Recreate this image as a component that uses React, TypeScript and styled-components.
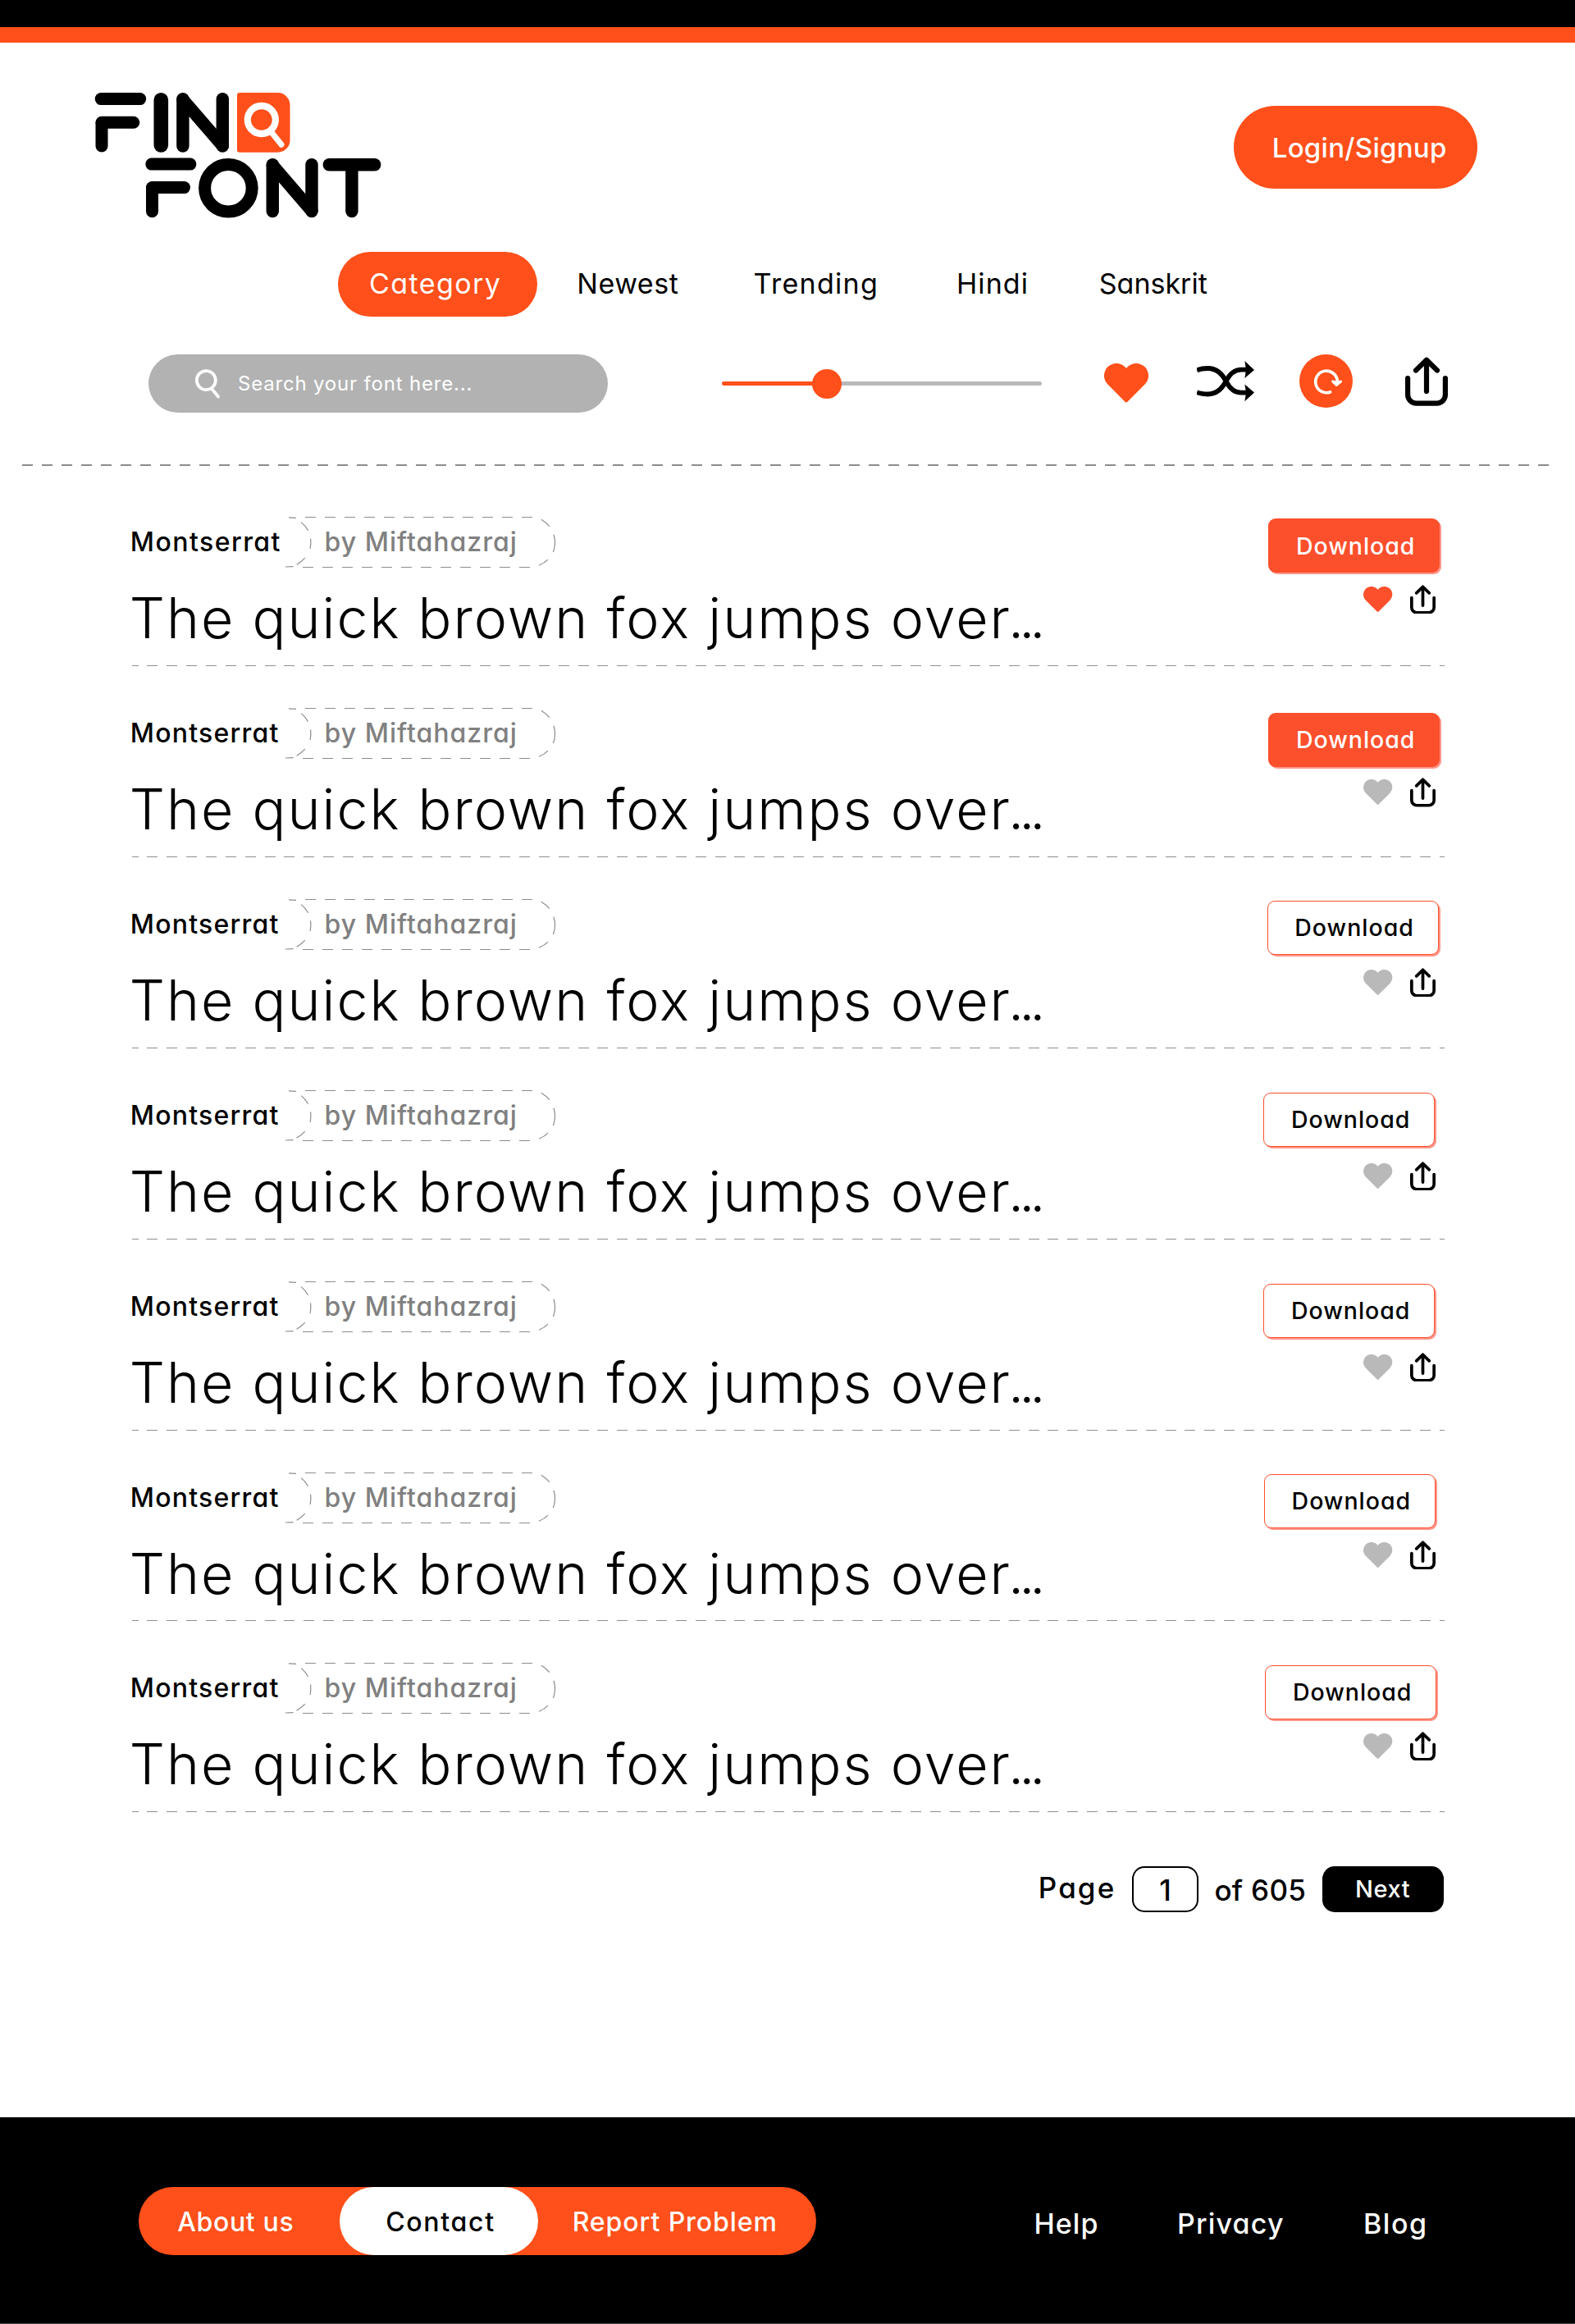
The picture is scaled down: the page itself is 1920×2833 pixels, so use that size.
import React from "react";
import styled, { createGlobalStyle } from "styled-components";

const ORANGE = "#ff4f1a";
const CORAL = "#fc4f2c";
const GREY = "#b9b9b9";

const GlobalStyle = createGlobalStyle`
  *, *::before, *::after { box-sizing: border-box; }
  body {
    margin: 0;
    background: #fff;
    color: #000;
    font-family: Inter, "Liberation Sans", sans-serif;
    font-feature-settings: "cv11";
  }
  button { font: inherit; font-feature-settings: inherit; border: 0; padding: 0; cursor: pointer; }
  a { color: inherit; text-decoration: none; }
  svg { display: block; flex: none; }
`;

const Page = styled.div`
  width: 1920px;
  height: 2833px;
  overflow: hidden;
  white-space: nowrap;
`;

const TopBar = styled.div`
  height: 52.3px;
  background: ${ORANGE};
  border-top: 33px solid #000;
`;

const Header = styled.header`
  display: flex;
  justify-content: space-between;
  align-items: flex-start;
  height: 254.7px;
  padding: 0 118.8px 0 115px;
`;

const Logo = styled.svg`
  margin-top: 59.7px;
`;

const LoginButton = styled.button`
  width: 297.2px;
  height: 101.3px;
  margin-top: 76.7px;
  padding-left: 46.7px;
  border-radius: 51px;
  background: ${ORANGE};
  color: #fff;
  text-align: left;
  font-size: 33px;
  font-weight: 500;
  letter-spacing: 0.28px;
`;

const Nav = styled.nav`
  display: grid;
  grid-template-columns: 291.3px 215.3px 247.4px 173.8px auto;
  align-items: center;
  height: 78.7px;
  padding-left: 412px;
`;

const NavItem = styled.a<{ $spacing: number; $active?: boolean }>`
  height: 78.7px;
  line-height: 78.7px;
  font-size: 34px;
  letter-spacing: ${(p) => p.$spacing}px;
  ${(p) =>
    p.$active &&
    `
    width: 243.2px;
    padding-left: 38px;
    border-radius: 40px;
    background: ${ORANGE};
    color: #fff;
  `}
`;

const Toolbar = styled.div`
  display: flex;
  align-items: center;
  height: 71px;
  margin: 46px 0 63px;
  padding-left: 180.6px;
`;

const SearchBox = styled.label`
  display: flex;
  align-items: center;
  width: 560.2px;
  height: 71px;
  padding-left: 56.4px;
  border-radius: 36px;
  background: #b2b2b2;
`;

const SearchInput = styled.input`
  width: 380px;
  height: 40px;
  margin-left: 21px;
  padding: 0;
  border: 0;
  outline: 0;
  background: transparent;
  color: #fff;
  font: 400 24px Inter, sans-serif;
  letter-spacing: 0.81px;
  &::placeholder { color: #fff; opacity: 1; }
`;

const SliderTrack = styled.div`
  display: flex;
  align-items: center;
  width: 390px;
  height: 5px;
  margin: 1px 76px 0 138.8px;
  border-radius: 3px;
  background: linear-gradient(to right, ${ORANGE} 128px, ${GREY} 128px);
`;

const SliderKnob = styled.div`
  width: 36px;
  height: 36px;
  margin-left: 110.6px;
  border-radius: 50%;
  background: ${ORANGE};
`;

const Tools = styled.div`
  display: grid;
  grid-template-columns: 113.9px 124.4px 128.7px auto;
  align-items: center;
`;

const IconButton = styled.button<{ $top?: number }>`
  background: none;
  margin-top: ${(p) => p.$top ?? 0}px;
`;

const RefreshBadge = styled.button`
  display: flex;
  align-items: center;
  justify-content: center;
  width: 65.4px;
  height: 65.4px;
  margin-top: -5px;
  border-radius: 50%;
  background: ${ORANGE};
`;

const SectionRule = styled.div`
  width: 1862px;
  height: 2px;
  margin-left: 27px;
  background: repeating-linear-gradient(to right, #8c8c8c 0 13.5px, transparent 13.5px 24px);
`;

const FontList = styled.ul`
  list-style: none;
  width: 1599.8px;
  margin: 11.4px 0 0 160.8px;
  padding: 0;
`;

const FontRow = styled.li`
  display: grid;
  grid-template-columns: 1fr auto;
  grid-template-rows: 1fr 1px;
  height: 232.9px;
`;

const RowRule = styled.div`
  grid-column: 1 / -1;
  height: 1px;
  background: repeating-linear-gradient(to right, #8f8f8f 0 13px, transparent 13px 23.87px);
  background-position-x: -5.5px;
  background-size: 1610px 1px;
`;

const FontInfo = styled.div`
  padding-top: 49px;
`;

const Meta = styled.div`
  display: flex;
  height: 66px;
  line-height: 66px;
  font-size: 32px;
  font-weight: 500;
`;

const FontName = styled.span<{ $spacing: number }>`
  width: 181.2px;
  margin-left: -2px;
  letter-spacing: ${(p) => p.$spacing}px;
`;

const AuthorTag = styled.span`
  position: relative;
  width: 340px;
  padding-left: 55.6px;
  color: #808080;
  letter-spacing: 1px;
`;

const TagOutline = styled.svg`
  position: absolute;
  inset: 0;
`;

const Sample = styled.p`
  margin: 20px 0 0 -3px;
  line-height: 79px;
  font-size: 68px;
  font-weight: 300;
  letter-spacing: 2px;
`;

const Ellipsis = styled.span`
  margin-left: -4px;
  letter-spacing: -6px;
`;

const Actions = styled.div`
  display: flex;
  flex-direction: column;
  align-items: flex-end;
`;

const DownloadButton = styled.button<{ $top: number; $right: number; $filled: boolean }>`
  width: 209px;
  height: 66px;
  margin: ${(p) => p.$top}px ${(p) => p.$right}px 0 0;
  padding-left: ${(p) => (p.$filled ? 33.7 : 32.7)}px;
  border: ${(p) => (p.$filled ? "0" : `1px solid ${CORAL}`)};
  border-radius: 9px;
  background: ${(p) => (p.$filled ? CORAL : "#fff")};
  box-shadow: 2px 2px 0 #ff968a;
  color: ${(p) => (p.$filled ? "#fff" : "#000")};
  text-align: left;
  font-size: 28.5px;
  font-weight: 500;
  letter-spacing: 0.98px;
`;

const RowIcons = styled.div<{ $gap: number }>`
  display: flex;
  align-items: center;
  gap: 21.7px;
  margin: ${(p) => p.$gap}px 10.4px 0 0;
`;

const Pagination = styled.div`
  display: flex;
  align-items: center;
  height: 56.7px;
  margin: 65.3px 0 249.3px;
  padding-left: 1265.8px;
  font-size: 35px;
  font-weight: 500;
`;

const PageLabel = styled.span`
  width: 114.2px;
  padding-bottom: 4px;
  letter-spacing: 2.1px;
`;

const PageInput = styled.span`
  display: flex;
  justify-content: center;
  align-items: center;
  width: 81px;
  height: 56.7px;
  padding-top: 2px;
  border: 2px solid #000;
  border-radius: 15px;
`;

const PageTotal = styled.span`
  width: 151.3px;
  padding: 2px 0 0 19.4px;
  letter-spacing: 0.32px;
`;

const NextButton = styled.button`
  width: 148.1px;
  height: 56.7px;
  padding-left: 39.7px;
  flex: none;
  border-radius: 15px;
  background: #000;
  color: #fff;
  text-align: left;
  font-size: 29px;
  font-weight: 500;
  letter-spacing: 0.56px;
`;

const Footer = styled.footer`
  display: flex;
  align-items: flex-start;
  height: 252px;
  padding: 85px 0 0 168.7px;
  background: #000;
  border-bottom: 1px solid #444;
  color: #fff;
  font-weight: 500;
`;

const FooterPills = styled.div`
  display: grid;
  grid-template-columns: 245.7px 241.6px 1fr;
  width: 826px;
  height: 83px;
  border-radius: 42px;
  background: ${ORANGE};
  font-size: 32px;
  line-height: 85px;
`;

const PillLink = styled.a<{ $pad: number; $spacing: number; $active?: boolean }>`
  height: 83px;
  padding-left: ${(p) => p.$pad}px;
  letter-spacing: ${(p) => p.$spacing}px;
  border-radius: 42px;
  ${(p) => p.$active && "background: #fff; color: #000;"}
`;

const FooterLinks = styled.div`
  display: grid;
  grid-template-columns: 174.6px 227px auto;
  margin-left: 265.7px;
  font-size: 34px;
  line-height: 89px;
`;

const FooterLink = styled.a<{ $spacing: number }>`
  letter-spacing: ${(p) => p.$spacing}px;
`;

function BrandLogo() {
  return (
    <Logo width="350" height="155" viewBox="115 112 350 155" role="img" aria-label="Find Font">
      <g stroke="#000" strokeLinecap="round" strokeLinejoin="round" fill="none">
        <g strokeWidth="15">
          <line x1="123.2" y1="120.6" x2="170.7" y2="120.6" />
          <line x1="124" y1="149.3" x2="162.8" y2="149.3" />
          <line x1="124" y1="149.8" x2="124" y2="178" />
        </g>
        <line x1="196.3" y1="121.8" x2="196.3" y2="177" strokeWidth="17.6" />
        <g strokeWidth="15.4">
          <line x1="222.9" y1="120.8" x2="222.9" y2="178" />
          <line x1="222.9" y1="121.5" x2="271.3" y2="177.5" />
          <line x1="271.3" y1="120.8" x2="271.3" y2="178" />
        </g>
        <g strokeWidth="15">
          <line x1="184.8" y1="200.1" x2="231.9" y2="200.1" />
          <line x1="185.5" y1="228.6" x2="224.5" y2="228.6" />
          <line x1="185.5" y1="229" x2="185.5" y2="257.8" />
          <circle cx="278.4" cy="229.3" r="28.8" />
        </g>
        <g strokeWidth="15.4">
          <line x1="332.3" y1="200.8" x2="332.3" y2="257.6" />
          <line x1="332.3" y1="201.5" x2="380" y2="257" />
          <line x1="380" y1="200.8" x2="380" y2="257.6" />
        </g>
        <g strokeWidth="15.4">
          <line x1="401.3" y1="200.8" x2="456.7" y2="200.8" />
          <line x1="428.9" y1="200.8" x2="428.9" y2="257.6" />
        </g>
      </g>
      <path
        d="M292 113H338.5A15 15 0 0 1 353.5 128V170.7A15 15 0 0 1 338.5 185.7H292A3 3 0 0 1 289 182.7V116A3 3 0 0 1 292 113Z"
        fill={ORANGE}
      />
      <circle cx="318.8" cy="146" r="17" fill="none" stroke="#fff" strokeWidth="8.3" />
      <line x1="330" y1="160" x2="343" y2="176.3" stroke="#fff" strokeWidth="7" strokeLinecap="round" />
    </Logo>
  );
}

function HeartIcon({ width, color }: { width: number; color: string }) {
  return (
    <svg width={width} height={width * 0.889} viewBox="0 0 54 48" fill={color}>
      <path d="M4.4 25.6A15 15 0 1 1 27 6A15 15 0 1 1 49.6 25.6L28 47.2Q27 48 26 47.2Z" />
    </svg>
  );
}

function ShareIcon({ width }: { width: number }) {
  return (
    <svg
      width={width}
      height={(width * 60) / 52}
      viewBox="0 0 52 60"
      fill="none"
      stroke="#000"
      strokeWidth="6.2"
      strokeLinecap="round"
      strokeLinejoin="round"
    >
      <path d="M3.1 26V46A10.5 10.5 0 0 0 13.6 56.6H38.4A10.5 10.5 0 0 0 48.9 46V26" />
      <path d="M26 4V42M13 16.5L26 3.8L39 16.5" />
    </svg>
  );
}

function ShuffleIcon() {
  return (
    <svg width="70" height="50" viewBox="0 0 70 50" fill="none" stroke="#000" strokeWidth="5.8">
      <path d="M0 11.3C4 9.5 9 9 13.5 9C25 9 31 16 35.5 24.7C40 33.5 46 38.7 54 38.7H60" />
      <path d="M0 38.2C4 40 9 40.5 13.5 40.5C25 40.5 31 33.4 35.5 24.7C40 16 46 10.7 54 10.7H60" />
      <path d="M58.4 0L70 11L58.4 21L60 11Z" fill="#000" stroke="none" />
      <path d="M58.4 28.5L70 38.6L58.4 49.3L60 38.6Z" fill="#000" stroke="none" />
    </svg>
  );
}

function RefreshIcon() {
  return (
    <svg width="65.4" height="65.4" viewBox="0 0 65.4 65.4" fill="none" stroke="#fff" strokeLinecap="round" strokeLinejoin="round">
      <path d="M37.6 45.9A13.3 13.3 0 1 1 46.3 33" strokeWidth="3.7" />
      <path d="M40.8 33L45.3 37.4L50.5 33L46 34.5Z" strokeWidth="3.2" fill="#fff" />
    </svg>
  );
}

function SearchIcon() {
  return (
    <svg width="32" height="37" viewBox="0 0 32 37" fill="none" stroke="#fff" strokeLinecap="round">
      <circle cx="14.3" cy="14.6" r="11.5" strokeWidth="3.8" />
      <path d="M22 26L29 34.5" strokeWidth="3.8" />
    </svg>
  );
}

const TAG_DASHES = [
  "M12 2.9L21 3.4",
  "M27.2 8.6Q32 12.5 35.6 18.7",
  "M38.6 28.5Q39.4 34 38.2 41",
  "M31.8 52.2Q28 56.5 21.6 60.3",
  "M8 63L17.5 62.6",
  "M319.8 5.2Q325.5 8.6 329.8 13.7",
  "M335 23.7Q338.4 34 334.4 45",
  "M328 54.2Q324 58.4 317 61.3",
];

function DashedTag() {
  return (
    <TagOutline width="340" height="66" viewBox="0 0 340 66" fill="none" stroke="#8c8c8c" strokeWidth="1.2">
      <path d="M32 2.5H309" strokeDasharray="13 11" />
      <path d="M306 63.5H29" strokeDasharray="13 11" />
      {TAG_DASHES.map((d) => (
        <path key={d} d={d} />
      ))}
    </TagOutline>
  );
}

type FontItem = { filled?: boolean; liked?: boolean; top: number; right: number; gap: number; spacing?: number };

const FONTS: FontItem[] = [
  { filled: true, liked: true, top: 53.2, right: 5.4, gap: 14.4, spacing: 1.45 },
  { filled: true, top: 56.6, right: 5.4, gap: 13.7 },
  { top: 52.9, right: 7, gap: 15.8 },
  { top: 53.9, right: 11.4, gap: 18.1 },
  { top: 53.9, right: 11.4, gap: 18 },
  { top: 53.3, right: 10.7, gap: 14.7 },
  { top: 53.5, right: 9.4, gap: 14.6 },
];

export default function App() {
  return (
    <Page>
      <GlobalStyle />
      <TopBar />
      <Header>
        <BrandLogo />
        <LoginButton>Login/Signup</LoginButton>
      </Header>
      <Nav>
        <NavItem $active $spacing={1.43}>Category</NavItem>
        <NavItem $spacing={0.51}>Newest</NavItem>
        <NavItem $spacing={1.29}>Trending</NavItem>
        <NavItem $spacing={1.08}>Hindi</NavItem>
        <NavItem $spacing={0}>Sanskrit</NavItem>
      </Nav>
      <Toolbar>
        <SearchBox>
          <SearchIcon />
          <SearchInput placeholder="Search your font here..." />
        </SearchBox>
        <SliderTrack>
          <SliderKnob />
        </SliderTrack>
        <Tools>
          <IconButton><HeartIcon width={54} color={ORANGE} /></IconButton>
          <IconButton $top={-4}><ShuffleIcon /></IconButton>
          <RefreshBadge><RefreshIcon /></RefreshBadge>
          <IconButton $top={-4}><ShareIcon width={52} /></IconButton>
        </Tools>
      </Toolbar>
      <SectionRule />
      <FontList>
        {FONTS.map((font, i) => (
          <FontRow key={i}>
            <FontInfo>
              <Meta>
                <FontName $spacing={font.spacing ?? 1.22}>Montserrat</FontName>
                <AuthorTag>
                  <DashedTag />
                  by Miftahazraj
                </AuthorTag>
              </Meta>
              <Sample>
                The quick brown fox jumps over<Ellipsis>...</Ellipsis>
              </Sample>
            </FontInfo>
            <Actions>
              <DownloadButton $top={font.top} $right={font.right} $filled={!!font.filled}>
                Download
              </DownloadButton>
              <RowIcons $gap={font.gap}>
                <HeartIcon width={35.3} color={font.liked ? CORAL : GREY} />
                <ShareIcon width={31} />
              </RowIcons>
            </Actions>
            <RowRule />
          </FontRow>
        ))}
      </FontList>
      <Pagination>
        <PageLabel>Page</PageLabel>
        <PageInput>1</PageInput>
        <PageTotal>of 605</PageTotal>
        <NextButton>Next</NextButton>
      </Pagination>
      <Footer>
        <FooterPills>
          <PillLink $pad={47.6} $spacing={0.63}>About us</PillLink>
          <PillLink $pad={55.8} $spacing={1.68} $active>Contact</PillLink>
          <PillLink $pad={41.7} $spacing={0.92}>Report Problem</PillLink>
        </FooterPills>
        <FooterLinks>
          <FooterLink $spacing={1.05}>Help</FooterLink>
          <FooterLink $spacing={1.19}>Privacy</FooterLink>
          <FooterLink $spacing={1.52}>Blog</FooterLink>
        </FooterLinks>
      </Footer>
    </Page>
  );
}
